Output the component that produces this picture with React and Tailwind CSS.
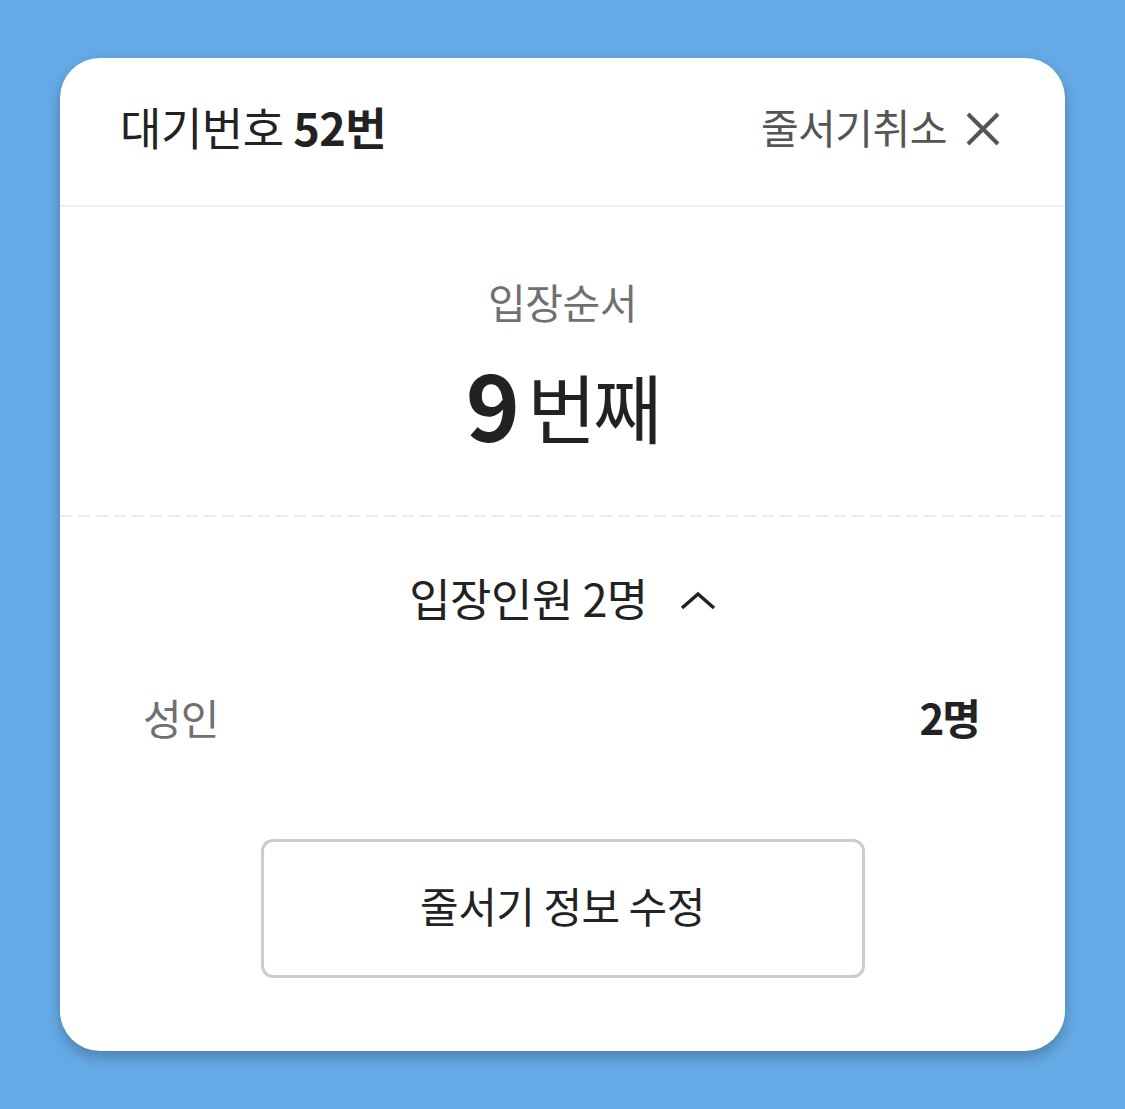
import React from 'react';

const ChevronUp = () => (
  <svg width="36" height="20" viewBox="0 0 36 20" fill="none">
    <path d="M2 17 L18 3 L34 17" stroke="#222" strokeWidth="3.5" />
  </svg>
);

const CloseIcon = () => (
  <svg width="36" height="36" viewBox="0 0 36 36" fill="none">
    <path d="M3 3 L33 33 M33 3 L3 33" stroke="#555" strokeWidth="4" />
  </svg>
);

export default function App() {
  return (
    <div className="min-h-[1109px] w-full bg-[#65aae6] pt-[58px] px-[60px] font-['Noto_Sans_CJK_KR','Noto_Sans',sans-serif]">
      <div className="w-[1005px] h-[993px] bg-white rounded-[40px] shadow-[0_6px_14px_rgba(0,0,0,0.25)] flex flex-col overflow-hidden">
        {/* Header */}
        <div className="h-[149px] flex items-center justify-between pl-[60px] pr-[64px] pb-[10px] border-b-2 border-[#efefef]">
          <h1 className="text-[45px] text-[#222] tracking-[-0.5px] leading-none">
            대기번호 <span className="font-bold">52번</span>
          </h1>
          <button className="flex items-center gap-[18px] text-[41px] text-[#555] tracking-[-0.5px] leading-none">
            줄서기취소
            <span className="mt-[4px]"><CloseIcon /></span>
          </button>
        </div>

        {/* Order */}
        <div className="h-[308px] flex flex-col items-center pt-[74px]">
          <p className="text-[41px] text-[#707070] tracking-[-0.5px] leading-none">입장순서</p>
          <div className="mt-[34px] flex items-end text-[#222] leading-none">
            <span className="text-[92px] font-bold">9</span>
            <span className="text-[75px] ml-[7px] mb-[5px] tracking-[-3px]">번째</span>
          </div>
        </div>
        <div className="h-[2px] bg-[repeating-linear-gradient(90deg,#ececec_0_12px,transparent_12px_18px)]" />

        {/* People */}
        <div className="flex flex-col flex-1">
          <div className="flex items-center justify-center gap-[32px] pt-[58px]">
            <span className="text-[45px] text-[#222] tracking-[-0.5px] leading-none">입장인원 2명</span>
            <span className="mt-[6px]"><ChevronUp /></span>
          </div>
          <div className="flex items-center justify-between pl-[83px] pr-[86px] mt-[76px]">
            <span className="text-[42px] text-[#707070] tracking-[-1px] leading-none">성인</span>
            <span className="text-[42px] font-bold text-[#222] tracking-[-2px] leading-none">2명</span>
          </div>
          <div className="flex justify-center mt-[101px]">
            <button className="w-[604px] h-[139px] pb-[8px] border-[3px] border-[#cccccc] rounded-[12px] text-[42px] text-[#222] tracking-[-0.5px] leading-none">
              줄서기 정보 수정
            </button>
          </div>
        </div>
      </div>
    </div>
  );
}
